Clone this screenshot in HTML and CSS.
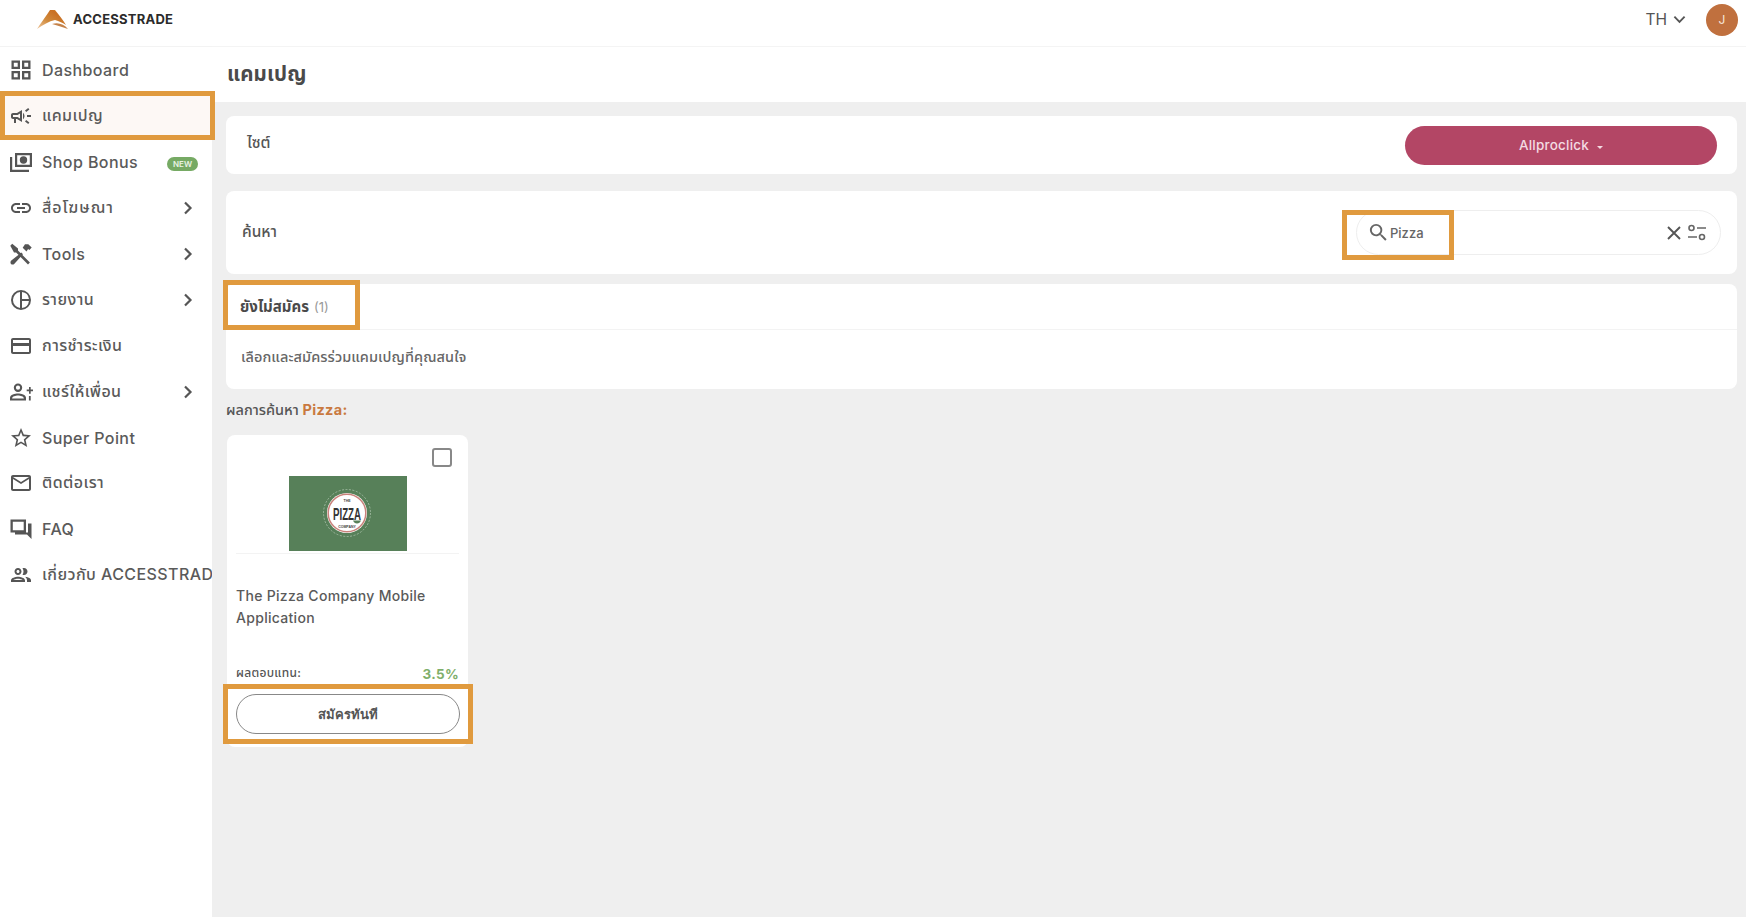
FILE: index.html
```html
<!DOCTYPE html>
<html lang="th">
<head>
<meta charset="utf-8">
<title>ACCESSTRADE</title>
<link rel="stylesheet" href="styles.css">
</head>
<body>
<div class="app">
  <aside class="sidebar">
    <div class="brand">
      <svg class="brand-mark" viewBox="0 0 31 19"><defs><linearGradient id="g" x1="0" y1="1" x2="1" y2="0"><stop offset="0" stop-color="#f0c9a0"/><stop offset=".4" stop-color="#d08a3c"/><stop offset=".75" stop-color="#c96f22"/><stop offset="1" stop-color="#eab04e"/></linearGradient></defs><path d="M0 19C4 13 9 6 13 0h5c4 5 8 10 11 15-3-2-7-4-11-5C12 11 6 15 0 19z" fill="url(#g)"/><path d="M15 14c6-2 12 0 16 5-5-2-10-3-16-5z" fill="#c4824a"/></svg>
      <span class="brand-name">ACCESSTRADE</span>
    </div>
    <nav class="menu">
      <a class="menu-item"><svg class="icon" viewBox="0 0 24 24"><path d="M2.500 2.500h8.500V11H2.500V2.500zm2.300 2.300v3.900h3.900V4.800H4.800zM13 2.500h8.500V11H13V2.500zm2.300 2.300v3.900h3.900V4.800h-3.900zM2.500 13H11v8.500H2.500V13zm2.300 2.300v3.900h3.900v-3.900H4.800zM13 13h8.500v8.500H13V13zm2.300 2.300v3.900h3.900v-3.900h-3.900z"/></svg><span class="menu-label">Dashboard</span></a>
      <a class="menu-item active"><svg class="icon" viewBox="0 0 24 24"><path d="M18 11v2h4v-2h-4zm-2 6.610c.96.71 2.210 1.650 3.200 2.390.4-.53.8-1.070 1.200-1.600-.99-.74-2.240-1.680-3.200-2.400-.4.54-.8 1.080-1.200 1.610zM20.400 5.600c-.4-.53-.8-1.070-1.200-1.600-.99.74-2.240 1.680-3.200 2.400.4.53.8 1.070 1.200 1.600.96-.72 2.210-1.650 3.200-2.400zM4 9c-1.100 0-2 .9-2 2v2c0 1.100.9 2 2 2h1v4h2v-4h1l5 3V6L8 9H4zm5.030 1.710L11 9.530v4.940l-1.970-1.180-.48-.29H4v-2h4.550l.48-.29zM15.500 12c0-1.330-.58-2.530-1.500-3.350v6.690c.92-.81 1.500-2.010 1.500-3.340z"/></svg><span class="menu-label">แคมเปญ</span></a>
      <a class="menu-item"><svg class="icon" viewBox="0 0 24 24"><path d="M6 3h17v14H6V3zm2.200 2.200v9.600h12.600V5.200H8.200zM14.500 6.300a3.700 3.700 0 1 1 0 7.400 3.700 3.700 0 0 1 0-7.400zM1 7h2.200v12.800H20V22H1V7z"/></svg><span class="menu-label">Shop Bonus</span><span class="badge-new">NEW</span></a>
      <a class="menu-item"><svg class="icon" viewBox="0 0 24 24"><path d="M3.900 12c0-1.710 1.390-3.100 3.100-3.100h4V7H7c-2.760 0-5 2.240-5 5s2.240 5 5 5h4v-1.900H7c-1.710 0-3.100-1.390-3.100-3.100zM8 13h8v-2H8v2zm9-6h-4v1.900h4c1.710 0 3.100 1.390 3.100 3.100s-1.390 3.100-3.100 3.100h-4V17h4c2.760 0 5-2.240 5-5s-2.240-5-5-5z"/></svg><span class="menu-label wide-thai">สื่อโฆษณา</span><svg class="chev" viewBox="0 0 10 14"><path d="M2 1.500 7.500 7 2 12.500"/></svg></a>
      <a class="menu-item"><svg class="icon" viewBox="0 0 24 24"><path d="M3.200 1.800 9 6.400v2.200l11.900 11.900-1.900 1.900L7.100 10.500H5L1.300 3.700zM17.500 9.500 13.700 5.700l2.300-3.400h3.300l3.400 3.300-2.300 2.500-1.300-1zM12.300 10.600l1.700 1.700-8.800 9.700c-.6.600-2.400.8-3.200 0s-.6-2.500 0-3.200z"/></svg><span class="menu-label">Tools</span><svg class="chev" viewBox="0 0 10 14"><path d="M2 1.500 7.500 7 2 12.500"/></svg></a>
      <a class="menu-item"><svg class="icon" viewBox="0 0 24 24"><path d="M12 2a10 10 0 1 1 0 20 10 10 0 0 1 0-20zm-1 2.060A8 8 0 0 0 11 19.940V4.060zm2 0V11h6.940A8 8 0 0 0 13 4.060zM13 13v6.940A8 8 0 0 0 19.940 13H13z"/></svg><span class="menu-label">รายงาน</span><svg class="chev" viewBox="0 0 10 14"><path d="M2 1.500 7.500 7 2 12.500"/></svg></a>
      <a class="menu-item"><svg class="icon" viewBox="0 0 24 24"><path d="M4 4h16c1.100 0 2 .9 2 2v12c0 1.100-.9 2-2 2H4c-1.100 0-2-.9-2-2V6c0-1.100.9-2 2-2zm0 2v3h16V6H4zm0 6v6h16v-6H4z"/></svg><span class="menu-label">การชำระเงิน</span></a>
      <a class="menu-item"><svg class="icon" viewBox="0 0 24 24"><path d="M9 3.500a4.200 4.200 0 1 1 0 8.400 4.200 4.200 0 0 1 0-8.400zm0 2.100a2.100 2.100 0 1 0 0 4.200 2.100 2.100 0 0 0 0-4.200zM9 13.500c3 0 8 1.300 8 4.300V20.500H1v-2.700c0-3 5-4.300 8-4.300zm0 2.100c-2.500 0-5.700 1-5.900 2.800h11.800c-.2-1.800-3.400-2.800-5.900-2.800zM20 7h1.700v2.500H24v1.700h-2.300v2.500H20v-2.500h-2.300V9.500H20V7zm-.1 9h1.800v4.500h-1.800z"/></svg><span class="menu-label">แชร์ให้เพื่อน</span><svg class="chev" viewBox="0 0 10 14"><path d="M2 1.500 7.500 7 2 12.500"/></svg></a>
      <a class="menu-item"><svg class="icon" viewBox="0 0 24 24"><path d="M22 9.240l-7.190-.62L12 2 9.190 8.630 2 9.240l5.460 4.730L5.820 21 12 17.270 18.180 21l-1.630-7.030L22 9.240zM12 15.400l-3.760 2.270 1-4.280-3.320-2.880 4.380-.38L12 6.100l1.710 4.040 4.380.38-3.320 2.880 1 4.280L12 15.400z"/></svg><span class="menu-label">Super Point</span></a>
      <a class="menu-item"><svg class="icon" viewBox="0 0 24 24"><path d="M20 4H4c-1.100 0-1.990.9-1.990 2L2 18c0 1.100.9 2 2 2h16c1.100 0 2-.9 2-2V6c0-1.100-.9-2-2-2zm0 14H4V8l8 5 8-5v10zm-8-7L4 6h16l-8 5z"/></svg><span class="menu-label">ติดต่อเรา</span></a>
      <a class="menu-item"><svg class="icon" viewBox="0 0 24 24"><path d="M1.500 2.500H17v13H1.500v-13zm2.300 2.300v8.400h10.900V4.800H3.800zM19 6.500h3.500V22L18 17.500H6v-2h13v-9z"/></svg><span class="menu-label">FAQ</span></a>
      <a class="menu-item"><svg class="icon" viewBox="0 0 24 24"><path d="M9 13.750c-2.340 0-7 1.170-7 3.500V19h14v-1.750c0-2.330-4.660-3.500-7-3.500zM4.340 17c.84-.58 2.870-1.250 4.660-1.250s3.820.67 4.660 1.250H4.340zM9 12c1.930 0 3.500-1.570 3.500-3.500S10.930 5 9 5 5.500 6.570 5.500 8.500 7.070 12 9 12zm0-5c.83 0 1.500.67 1.500 1.500S9.830 10 9 10s-1.500-.67-1.500-1.500S8.170 7 9 7zm7.040 6.810c1.160.84 1.960 1.960 1.960 3.440V19h4v-1.750c0-2.020-3.500-3.170-5.960-3.440zM15 12c1.930 0 3.500-1.570 3.500-3.500S16.930 5 15 5c-.54 0-1.040.13-1.500.35.63.89 1 1.980 1 3.150s-.37 2.260-1 3.150c.46.22.96.35 1.500.35z"/></svg><span class="menu-label">เกี่ยวกับ ACCESSTRADE</span></a>
    </nav>
  </aside>
  <div class="main">
    <header class="topbar">
      <span class="lang">TH</span>
      <svg class="lang-chev" viewBox="0 0 14 9"><path d="M1.500 1.500 7 7l5.500-5.500"/></svg>
      <span class="avatar">J</span>
    </header>
    <div class="title-bar"><h1 class="page-title">แคมเปญ</h1></div>
    <div class="content">
      <section class="panel site-panel">
        <span class="panel-label site-label">ไซต์</span>
        <button class="site-button">Allproclick<span class="caret"></span></button>
      </section>
      <section class="panel search-panel">
        <span class="panel-label">ค้นหา</span>
        <div class="search-box">
          <svg class="search-icon" viewBox="0 0 24 24"><path d="M15.500 14h-.79l-.28-.27A6.470 6.470 0 0 0 16 9.500 6.500 6.500 0 1 0 9.500 16c1.610 0 3.090-.59 4.230-1.570l.27.28v.79l5 4.990L20.490 19l-4.990-5zm-6 0C7.010 14 5 11.990 5 9.500S7.010 5 9.500 5 14 7.010 14 9.500 11.990 14 9.500 14z"/></svg>
          <span class="search-value">Pizza</span>
          <svg class="search-clear" viewBox="0 0 16 16"><path d="M2 2l12 12M14 2 2 14"/></svg>
          <svg class="search-tune" viewBox="0 0 20 18"><circle cx="4.500" cy="4" r="2.500"/><path d="M10 4h9M1 13h9"/><circle cx="15" cy="13" r="2.500"/></svg>
        </div>
      </section>
      <section class="panel tabs-panel">
        <div class="tab-row"><span class="tab-name">ยังไม่สมัคร</span><span class="tab-count">(1)</span></div>
        <p class="tab-desc">เลือกและสมัครร่วมแคมเปญที่คุณสนใจ</p>
      </section>
      <p class="result-line">ผลการค้นหา <strong class="result-term">Pizza:</strong></p>
      <article class="campaign-card">
        <div class="card-check"><span class="checkbox"></span></div>
        <div class="card-logo-wrap">
          <svg class="card-logo" viewBox="0 0 118 75">
            <rect width="118" height="75" fill="#578059"/>
            <circle cx="58" cy="37" r="23.500" fill="none" stroke="#a9c2aa" stroke-width=".8" stroke-dasharray="2 1.500"/>
            <circle cx="58" cy="37" r="20" fill="#fff"/>
            <circle cx="58" cy="37" r="18.800" fill="none" stroke="#c9827b" stroke-width="1.500"/>
            <text class="logo-the" x="58" y="26">THE</text>
            <text class="logo-word" x="44" y="43.500" textLength="28" lengthAdjust="spacingAndGlyphs">PIZZA</text>
            <path d="M64 44.500h8c-.8 2-2 3-4 3s-3.200-1-4-3z" fill="#578059"/>
            <text class="logo-small" x="58" y="51.500">COMPANY</text>
          </svg>
        </div>
        <h2 class="card-title">The Pizza Company Mobile Application</h2>
        <div class="card-rate"><span class="rate-label">ผลตอบแทน:</span><span class="rate-value">3.5%</span></div>
        <button class="apply-button">สมัครทันที</button>
      </article>
    </div>
  </div>
</div>
<div class="mark mark-menu"></div>
<div class="mark mark-search"></div>
<div class="mark mark-tab"></div>
<div class="mark mark-apply"></div>
</body>
</html>
```

FILE: styles.css
```css
* { box-sizing: border-box; }
html, body { margin: 0; height: 100%; overflow: hidden; }
body {
  font-family: "Inter", "Noto Sans", "Noto Sans Thai", "Open Sans", sans-serif;
  color: #555;
  background: #efefef;
}
.app { display: flex; height: 917px; position: relative; }

/* sidebar */
.sidebar { width: 212px; flex: none; background: #fff; overflow: hidden; }
.brand {
  height: 47px;
  display: flex;
  align-items: center;
  padding: 0 0 8px 37px;
  border-bottom: 1px solid #f3f3f3;
}
.brand-mark { width: 31px; height: 19px; margin-right: 5px; }
.brand-name { font-size: 13px; font-weight: 700; color: #2b2b2b; letter-spacing: .25px; }
.menu-item {
  height: 45.900px;
  display: flex;
  align-items: center;
  padding: 1px 0 0 9px;
  white-space: nowrap;
  color: #5a5a5a;
  font-size: 16px;
  font-weight: 500;
}
.menu-item.active { background: #fdf8f5; }
.icon { width: 24px; height: 24px; flex: none; margin-right: 9px; fill: #555; }
.menu-label { flex: none; letter-spacing: .42px; }
.menu-label.wide-thai { letter-spacing: 1px; }
.badge-new {
  margin-left: 29px;
  margin-top: 4px;
  background: #76aa64;
  color: #e8f3e3;
  font-size: 8px;
  font-weight: 600;
  border-radius: 7px;
  padding: 2px 6px;
  line-height: 10px;
}
.chev {
  width: 10px;
  height: 14px;
  margin-left: auto;
  margin-right: 19px;
  fill: none;
  stroke: #555;
  stroke-width: 2.200;
}

/* main */
.main { flex: 1; min-width: 0; display: flex; flex-direction: column; }
.topbar {
  height: 47px;
  background: #fff;
  border-bottom: 1px solid #f4f4f4;
  display: flex;
  align-items: center;
  justify-content: flex-end;
  padding: 0 8px 7px 0;
}
.lang { font-size: 15.500px; color: #555; margin-right: 6px; margin-bottom: 1px; }
.lang-chev { width: 13px; height: 9px; fill: none; stroke: #555; stroke-width: 2; margin-right: 20px; }
.avatar {
  width: 32px;
  height: 32px;
  border-radius: 50%;
  background: #c0703e;
  color: #f7e6da;
  font-size: 12px;
  display: flex;
  align-items: center;
  justify-content: center;
}
.title-bar {
  height: 55px;
  background: #fff;
  display: flex;
  align-items: center;
  padding-left: 15px;
  padding-bottom: 1px;
}
.page-title { margin: 0; font-size: 20.500px; font-weight: 700; color: #4a4a4a; letter-spacing: .2px; }
.content { padding: 14px 9px 0 14px; }
.panel { background: #fff; border-radius: 8px; }
.panel-label { font-size: 15.500px; font-weight: 500; color: #555; }
.site-panel {
  height: 58px;
  display: flex;
  align-items: center;
  justify-content: space-between;
  padding: 0 20px;
}
.site-label { margin-bottom: 4px; margin-left: 1px; }
.site-button {
  width: 312px;
  height: 39px;
  border: 0;
  border-radius: 20px;
  background: #b34665;
  color: #f3dbe2;
  font: 500 13.500px "Inter", sans-serif;
  letter-spacing: .2px;
}
.caret {
  display: inline-block;
  margin-left: 8px;
  vertical-align: 1px;
  border: 3px solid transparent;
  border-top-color: #f3dbe2;
  border-bottom: 0;
}
.search-panel {
  height: 83px;
  margin-top: 17px;
  display: flex;
  align-items: center;
  justify-content: space-between;
  padding: 0 16px 0 16px;
}
.search-box {
  width: 365px;
  height: 45px;
  border: 1px solid #eee;
  border-radius: 23px;
  display: flex;
  align-items: center;
  padding: 0 13px 0 11px;
}
.search-icon { width: 23px; height: 23px; fill: #666; flex: none; margin-left: -1px; }
.search-value { font-size: 13px; color: #666; font-weight: 500; }
.search-clear { width: 16px; height: 16px; margin-left: auto; fill: none; stroke: #555; stroke-width: 1.900; }
.search-tune { width: 20px; height: 18px; margin-left: 5px; fill: none; stroke: #666; stroke-width: 1.600; }
.tabs-panel { height: 105px; margin-top: 10px; }
.tab-row {
  height: 46px;
  border-bottom: 1px solid #f3f3f3;
  display: flex;
  align-items: center;
  padding: 1px 0 0 14px;
  gap: 5px;
}
.tab-name { font-size: 15px; font-weight: 700; color: #4a4a4a; }
.tab-count { font-size: 13px; color: #999; }
.tab-desc { margin: 0; padding: 17px 0 0 15px; font-size: 14.500px; line-height: 20px; letter-spacing: .1px; color: #666; font-weight: 500; }
.result-line { margin: 0; padding-top: 11px; height: 46px; font-size: 14.500px; line-height: 20px; color: #555; font-weight: 500; }
.result-term { color: #c9793f; font-weight: 700; letter-spacing: .3px; }

/* campaign card */
.campaign-card {
  width: 241px;
  height: 312px;
  margin-left: 1px;
  background: #fff;
  border-radius: 8px;
  padding: 0 9px;
  display: flex;
  flex-direction: column;
}
.card-check { height: 41px; display: flex; justify-content: flex-end; align-items: flex-end; padding: 0 7px 9px 0; flex: none; }
.checkbox { width: 20px; height: 19px; border: 2px solid #888; border-radius: 3px; }
.card-logo-wrap {
  height: 78px;
  border-bottom: 1px solid #f3f3f3;
  display: flex;
  justify-content: center;
  align-items: flex-start;
  flex: none;
}
.card-logo { width: 118px; height: 75px; display: block; }
.logo-the, .logo-small { font: 700 3.500px "Liberation Sans", sans-serif; fill: #444; text-anchor: middle; }
.logo-word { font: 700 17px "Liberation Sans", sans-serif; fill: #333; }
.card-title {
  margin: 31px 0 0;
  height: 44px;
  font-size: 14px;
  line-height: 21.500px;
  font-weight: 500;
  letter-spacing: .3px;
  color: #5a5a5a;
}
.card-rate {
  margin-top: 37px;
  display: flex;
  justify-content: space-between;
  align-items: flex-end;
  height: 16px;
}
.rate-label { font-size: 12px; line-height: 14px; color: #555; font-weight: 500; letter-spacing: .3px; margin-bottom: 2px; }
.rate-value { font-size: 13.500px; line-height: 16px; font-weight: 700; color: #7faf6b; letter-spacing: .3px; }
.apply-button {
  margin-top: 12px;
  height: 40px;
  width: 224px;
  background: #fff;
  border: 1px solid #888;
  border-radius: 20px;
  color: #555;
  font: 700 13px "Inter", "Noto Sans", sans-serif;
}

/* annotation boxes drawn over the screenshot */
.mark { position: absolute; border: 5px solid #e09a3e; pointer-events: none; }
.mark-menu { left: 0; top: 91px; width: 215px; height: 49px; }
.mark-search { left: 1342px; top: 210px; width: 112px; height: 50px; }
.mark-tab { left: 223px; top: 280px; width: 137px; height: 50px; }
.mark-apply { left: 223px; top: 684px; width: 250px; height: 60px; }
```
